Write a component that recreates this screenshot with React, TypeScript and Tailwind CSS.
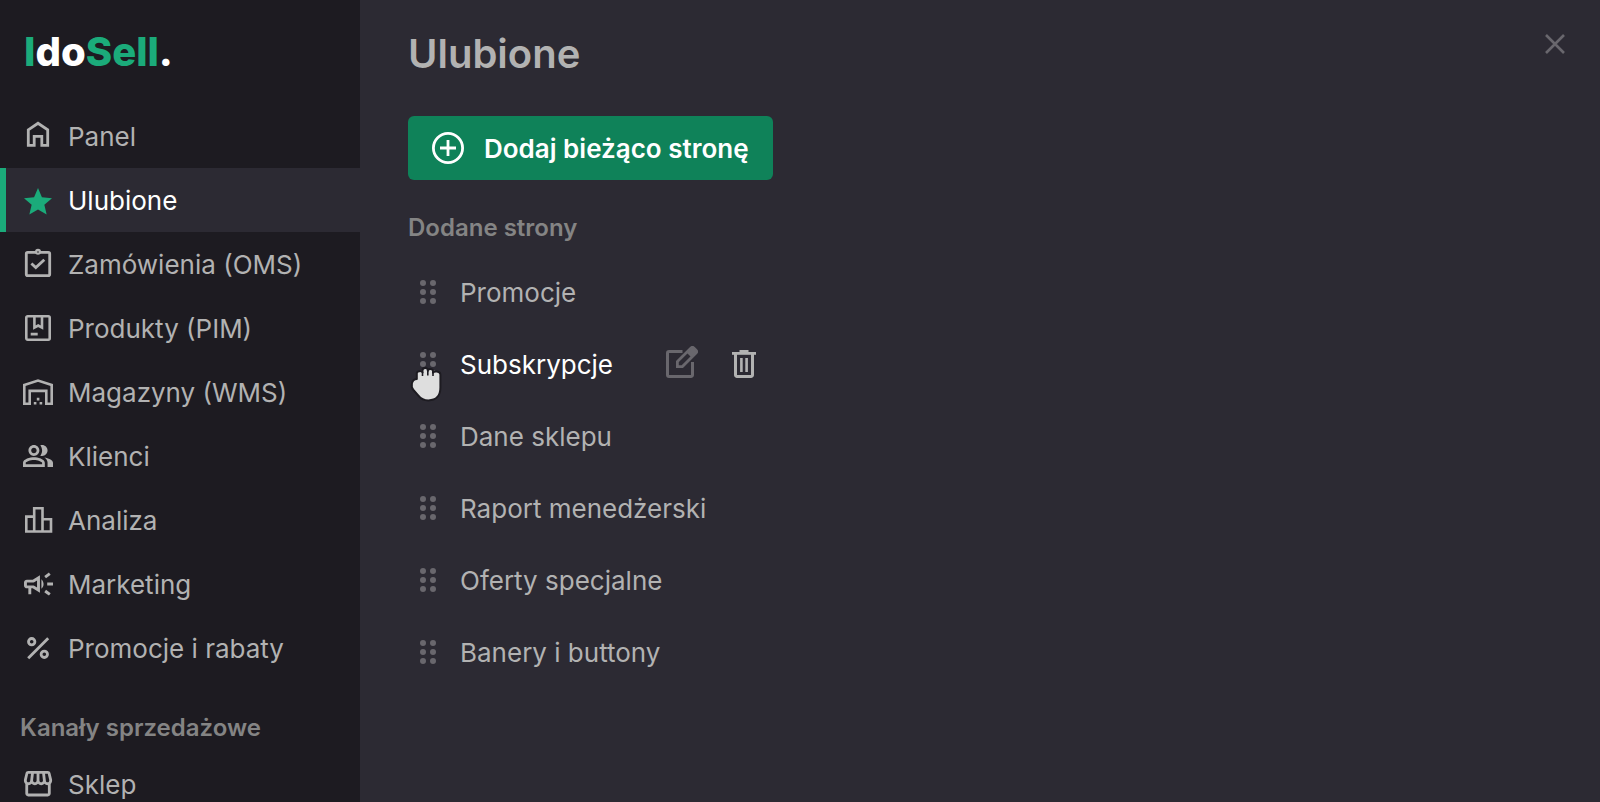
import React from 'react';

type IconName =
  | 'home'
  | 'star'
  | 'orders'
  | 'products'
  | 'warehouse'
  | 'clients'
  | 'chart'
  | 'megaphone'
  | 'percent'
  | 'store';

interface NavItem {
  label: string;
  icon: IconName;
}

const mainNav: NavItem[] = [
  { label: 'Panel', icon: 'home' },
  { label: 'Ulubione', icon: 'star' },
  { label: 'Zamówienia (OMS)', icon: 'orders' },
  { label: 'Produkty (PIM)', icon: 'products' },
  { label: 'Magazyny (WMS)', icon: 'warehouse' },
  { label: 'Klienci', icon: 'clients' },
  { label: 'Analiza', icon: 'chart' },
  { label: 'Marketing', icon: 'megaphone' },
  { label: 'Promocje i rabaty', icon: 'percent' },
];

const channelNav: NavItem[] = [{ label: 'Sklep', icon: 'store' }];

const favourites = [
  'Promocje',
  'Subskrypcje',
  'Dane sklepu',
  'Raport menedżerski',
  'Oferty specjalne',
  'Banery i buttony',
];

const iconShapes: Record<IconName, React.ReactNode> = {
  home: (
    <path
      d="M6.3 9.8L16 3.3l9.7 6.5v15.6h-5.9V16.3h-7.6v9.1H6.3z"
      fill="none"
      stroke="currentColor"
      strokeWidth="2.8"
    />
  ),
  star: (
    <path
      transform="translate(-.8 1.2) scale(1.4)"
      d="M12 17.27L18.18 21l-1.64-7.03L22 9.24l-7.19-.61L12 2 9.19 8.63 2 9.24l5.46 4.73L5.82 21z"
    />
  ),
  orders: (
    <g fill="none" stroke="currentColor" strokeWidth="2.8">
      <rect x="4.3" y="4.3" width="23.4" height="23.4" rx="1.4" />
      <circle cx="16" cy="3.8" r="3" fill="currentColor" stroke="none" />
      <circle cx="16" cy="4" r=".8" fill="#1d1b21" stroke="none" />
      <path d="M9.4 15.4l4.4 4.2 8.5-7.9" />
    </g>
  ),
  products: (
    <g fill="none" stroke="currentColor" strokeWidth="2.6">
      <rect x="4.3" y="4.3" width="23.4" height="23.4" rx="1.4" />
      <path d="M12.4 4v11.6l3.8-2.1 3.8 2.1V4M8.7 22.1h7" />
    </g>
  ),
  warehouse: (
    <g>
      <path
        d="M2.3 9L16 4.6 29.7 9v18.7h-5.4V14.9H7.7v12.8H2.3z"
        fill="none"
        stroke="currentColor"
        strokeWidth="2.6"
      />
      <path d="M14.8 21.8h2.6v2.6h-2.6zM11.8 26h2.6v2.6h-2.6zM17.6 26h2.6v2.6h-2.6z" />
    </g>
  ),
  clients: (
    <path
      transform="translate(-.36 -.4) scale(1.364)"
      d="M16.67 13.13C18.04 14.06 19 15.32 19 17v3h4v-3c0-2.18-3.57-3.47-6.33-3.87zM15 12c2.21 0 4-1.79 4-4s-1.79-4-4-4c-.47 0-.91.1-1.33.24C14.5 5.27 15 6.58 15 8s-.5 2.73-1.33 3.76c.42.14.86.24 1.33.24zM9 12c2.21 0 4-1.79 4-4s-1.79-4-4-4-4 1.79-4 4 1.79 4 4 4zm0-6c1.1 0 2 .9 2 2s-.9 2-2 2-2-.9-2-2 .9-2 2-2zM9 13c-2.67 0-8 1.34-8 4v3h16v-3c0-2.66-5.33-4-8-4zm6 5H3v-.99C3.2 16.29 6.3 15 9 15s5.8 1.29 6 2v1z"
    />
  ),
  chart: (
    <path
      d="M12.2 12.6H4.3v14.9h7.9zM12.2 4.3h8.3v23.2h-8.3zM20.5 15.2H29v12.3h-8.5z"
      fill="none"
      stroke="currentColor"
      strokeWidth="2.6"
    />
  ),
  megaphone: (
    <path
      transform="translate(-.9 -1.4) scale(1.45)"
      d="M18 11v2h4v-2h-4zm-2 6.61c.96.71 2.21 1.65 3.2 2.39.4-.53.8-1.07 1.2-1.6-.99-.74-2.24-1.68-3.2-2.4-.4.54-.8 1.08-1.2 1.61zM20.4 5.6c-.4-.53-.8-1.07-1.2-1.6-.99.74-2.24 1.68-3.2 2.4.4.53.8 1.07 1.2 1.6.96-.72 2.21-1.65 3.2-2.4zM4 9c-1.1 0-2 .9-2 2v2c0 1.1.9 2 2 2h1v4h2v-4h1l5 3V6L8 9H4zm5.03 1.71L11 9.53v4.94l-1.97-1.18-.48-.29H4v-2h4.55l.48-.29zM15.5 12c0-1.33-.58-2.53-1.5-3.35v6.69c.92-.81 1.5-2.01 1.5-3.34z"
    />
  ),
  percent: (
    <g fill="none" stroke="currentColor" strokeWidth="2.8">
      <circle cx="9.7" cy="9.7" r="3.2" />
      <circle cx="22.3" cy="22.3" r="3.2" />
      <path d="M6.2 26.2l20-20" />
    </g>
  ),
  store: (
    <path
      transform="translate(-.9 -1.2) scale(1.41)"
      d="M21.9 8.89l-1.05-4.37c-.22-.9-1-1.52-1.91-1.52H5.05c-.9 0-1.69.63-1.9 1.52L2.1 8.89c-.24 1.02-.02 2.06.62 2.88.08.11.19.19.28.29V19c0 1.1.9 2 2 2h14c1.1 0 2-.9 2-2v-6.94c.09-.09.2-.18.28-.28.64-.82.87-1.87.62-2.89zm-2.99-3.9l1.05 4.37c.1.42.01.84-.25 1.17-.14.18-.44.47-.94.47-.61 0-1.14-.49-1.21-1.14L16.98 5l1.93-.01zM13 5h1.96l.54 4.52c.05.39-.07.78-.33 1.07-.22.26-.54.41-.95.41-.67 0-1.22-.59-1.22-1.31V5zM8.49 9.52L9.04 5H11v4.69c0 .72-.55 1.31-1.29 1.31-.34 0-.65-.15-.89-.41-.25-.29-.37-.68-.33-1.07zm-4.45-.16L5.05 5h1.97l-.58 4.86c-.08.65-.6 1.14-1.21 1.14-.49 0-.8-.29-.93-.47-.27-.32-.36-.75-.26-1.17zM5 19v-6.03c.08.01.15.03.23.03.87 0 1.66-.36 2.24-.95.6.6 1.4.95 2.31.95.87 0 1.65-.36 2.23-.93.59.57 1.39.93 2.29.93.84 0 1.64-.35 2.24-.95.58.59 1.37.95 2.24.95.08 0 .15-.02.23-.03V19H5z"
    />
  ),
};

const NavLink: React.FC<{ item: NavItem; active?: boolean }> = ({ item, active = false }) => (
  <a
    href="#"
    aria-current={active ? 'page' : undefined}
    className={`
      flex items-center h-16 shrink-0 border-l-6 pl-4 gap-3.5 text-[26px] whitespace-nowrap
      ${active
        ? 'border-[#1bab7a] bg-[#2c2a33] text-white'
        : 'border-transparent text-[#b2b2b2] hover:text-white'
      }
    `}
  >
    <svg
      viewBox="0 0 32 32"
      fill="currentColor"
      aria-hidden="true"
      className={`w-8 h-8 shrink-0 ${active ? 'text-[#1bab7a]' : ''}`}
    >
      {iconShapes[item.icon]}
    </svg>
    <span>{item.label}</span>
  </a>
);

const Sidebar: React.FC = () => (
  <aside className="w-[360px] shrink-0 flex flex-col bg-[#1d1b21]">
    <a
      href="#"
      className="flex items-center h-26 shrink-0 pl-6 text-[40px] font-extrabold text-white"
    >
      <span className="text-[#1bab7a]">I</span>
      <span>do</span>
      <span className="text-[#1bab7a]">Sell</span>
      <span>.</span>
    </a>
    <nav className="flex flex-col">
      {mainNav.map((item) => (
        <NavLink key={item.label} item={item} active={item.label === 'Ulubione'} />
      ))}
      <h2 className="pt-8 pb-2 pl-5 text-[24px] leading-8 font-semibold text-[#848484]">
        Kanały sprzedażowe
      </h2>
      {channelNav.map((item) => (
        <NavLink key={item.label} item={item} />
      ))}
    </nav>
  </aside>
);

const DragHandle: React.FC = () => (
  <svg viewBox="0 0 16 24" fill="currentColor" aria-hidden="true" className="w-4 h-6 text-[#69676d]">
    {[3, 12, 21].map((cy) => (
      <g key={cy}>
        <circle cx="3" cy={cy} r="3" />
        <circle cx="13" cy={cy} r="3" />
      </g>
    ))}
  </svg>
);

// Hand shown over the handle of the row being dragged
const GrabCursor: React.FC = () => (
  <svg
    viewBox="0 0 34 36"
    aria-hidden="true"
    className="absolute -left-2.5 top-3.5 w-[34px] h-9 pointer-events-none"
  >
    <path
      d="M6.8 13V7.2c0-2.6 5.3-2.6 5.7-.8V4.4c0-3.200 5-3.200 5.300-.4v.8c.4-2.600 5-2.600 5.200.4v1.600c.6-1.800 7.400-2.200 7.400 1.800v13c0 8.400-4.800 12.800-12 12.800-4.800 0-7.400-1.400-10-4.800l-5-5.600C.8 21 .8 13.600 6.800 13z"
      fill="#dedede"
      stroke="#1d1b21"
      strokeWidth="2"
      strokeLinejoin="round"
    />
    <path d="M12.5 6v4M17.8 4.5v5M23 6.500v3.500" stroke="#1d1b21" strokeWidth="1.6" />
  </svg>
);

const FavouriteRow: React.FC<{ label: string; active: boolean }> = ({ label, active }) => (
  <li className="flex items-center h-18 pl-3">
    <button
      type="button"
      aria-label={`Przenieś: ${label}`}
      className={`relative mr-6 ${active ? 'cursor-grabbing' : 'cursor-grab'}`}
    >
      <DragHandle />
      {active && <GrabCursor />}
    </button>
    <a
      href="#"
      className={`text-[26px] whitespace-nowrap ${active ? 'text-white' : 'text-[#b2b2b2] hover:text-white'}`}
    >
      {label}
    </a>
    {active && (
      <div className="flex items-center gap-[34px] ml-[53px]">
        <button type="button" aria-label="Edytuj" className="text-[#69676d]">
          <svg viewBox="0 0 32 36" fill="none" stroke="currentColor" className="w-8 h-9">
            <path
              d="M16.5 5.500H3A1.500 1.500 0 0 0 1.500 7v22A1.500 1.500 0 0 0 3 30.500h22a1.500 1.500 0 0 0 1.500-1.500V16"
              strokeWidth="3"
            />
            <path
              d="M11.4 20.600V15.600L25 2c1-1 1.800-1 2.800 0l2.200 2.200c1 1 1 1.800 0 2.800L16.400 20.600z"
              strokeWidth="2.8"
            />
            <path d="M20.5 6.500L26.500 1l5 5-6 5.500z" fill="currentColor" strokeWidth="0" />
          </svg>
        </button>
        <button type="button" aria-label="Usuń" className="text-[#b2b2b2]">
          <svg viewBox="0 0 24 28" fill="none" stroke="currentColor" className="w-6 h-7">
            <path d="M0 3.400h24" strokeWidth="2.8" />
            <path d="M7.5 1h9" strokeWidth="2" />
            <path d="M3.5 4v21A1.500 1.500 0 0 0 5 26.500h14a1.500 1.500 0 0 0 1.500-1.500V4" strokeWidth="3" />
            <path d="M9.4 8v14M14.600 8v14" strokeWidth="2.6" />
          </svg>
        </button>
      </div>
    )}
  </li>
);

const App: React.FC = () => {
  return (
    <div className="flex h-screen overflow-hidden bg-[#2c2a33] font-['Inter',sans-serif]">
      <Sidebar />
      <main className="flex-1 min-w-0 pt-8 pl-12 pr-8">
        <div className="flex items-start justify-between">
          <h1 className="text-[40px] leading-11 font-semibold text-[#b2b2b2]">Ulubione</h1>
          <button type="button" aria-label="Zamknij" className="text-[#69676d] hover:text-white">
            <svg viewBox="0 0 24 24" fill="none" stroke="currentColor" className="w-6 h-6">
              <path d="M2 3l18 18M20 3L2 21" strokeWidth="2.6" />
            </svg>
          </button>
        </div>

        <button
          type="button"
          className="flex items-center h-16 mt-10 px-6 gap-5 rounded-md bg-[#0f8259] text-[26px] font-semibold text-white whitespace-nowrap"
        >
          <svg viewBox="0 0 32 32" fill="none" stroke="currentColor" className="w-8 h-8">
            <circle cx="16" cy="16" r="14.6" strokeWidth="2.8" />
            <path d="M16 8v16M8 16h16" strokeWidth="2.8" />
          </svg>
          Dodaj bieżąco stronę
        </button>

        <h2 className="mt-8 text-[24px] leading-8 font-semibold text-[#848484]">Dodane strony</h2>
        <ul className="mt-3">
          {favourites.map((label) => (
            <FavouriteRow key={label} label={label} active={label === 'Subskrypcje'} />
          ))}
        </ul>
      </main>
    </div>
  );
};

export default App;
